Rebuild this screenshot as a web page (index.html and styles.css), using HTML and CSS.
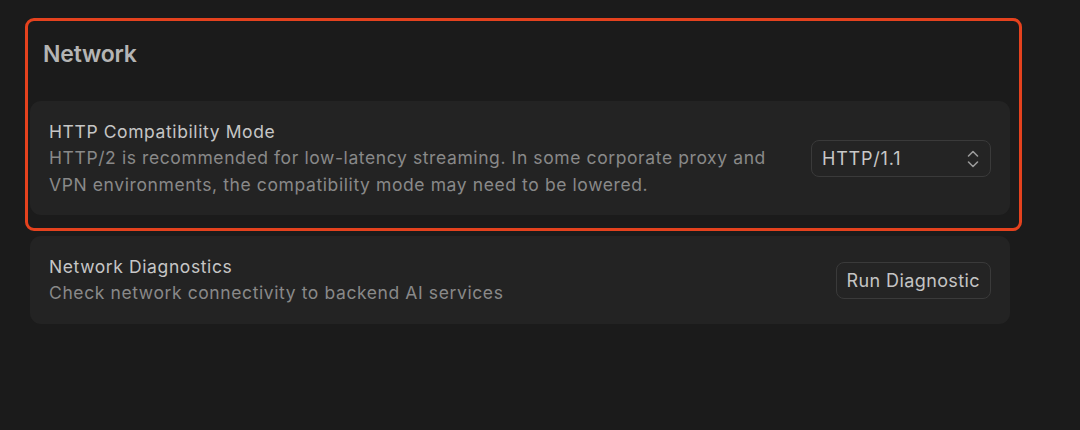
FILE: index.html
```html
<!DOCTYPE html>
<html lang="en">
<head>
<meta charset="utf-8">
<title>Network Settings</title>
<link rel="stylesheet" href="styles.css">
</head>
<body>
<main class="page">
  <section class="section">
    <h2 class="section-title">Network</h2>
    <div class="card">
      <div class="card-text">
        <div class="card-title">HTTP Compatibility Mode</div>
        <div class="card-desc">HTTP/2 is recommended for low-latency streaming. In some corporate proxy and<br>VPN environments, the compatibility mode may need to be lowered.</div>
      </div>
      <div class="select">
        <span class="select-value">HTTP/1.1</span>
        <svg class="select-icon" width="12" height="20" viewBox="0 0 12 20" fill="none" stroke="currentColor" stroke-width="1.6" stroke-linecap="round" stroke-linejoin="round">
          <path d="M1.5 7 L6 2.5 L10.5 7"/>
          <path d="M1.5 13 L6 17.5 L10.5 13"/>
        </svg>
      </div>
    </div>
    <div class="highlight"></div>
  </section>
  <div class="card card-single">
    <div class="card-text">
      <div class="card-title">Network Diagnostics</div>
      <div class="card-desc">Check network connectivity to backend AI services</div>
    </div>
    <button class="btn" type="button">Run Diagnostic</button>
  </div>
</main>
</body>
</html>
```

FILE: styles.css
```css
* { box-sizing: border-box; }
html, body {
  margin: 0;
  background: #1b1b1b;
}
body {
  font-family: Inter, "Noto Sans", "Liberation Sans", sans-serif;
  color: #c6c6c6;
  -webkit-font-smoothing: antialiased;
}
.page {
  padding: 21px 0 0 30px;
  width: 1010px;
  display: flex;
  flex-direction: column;
  gap: 21px;
}
.section {
  position: relative;
  display: flex;
  flex-direction: column;
}
.section-title {
  margin: 0 0 0 13px;
  font-size: 23px;
  line-height: 28px;
  font-weight: 600;
  color: #b4b4b4;
  height: 80px;
  padding-top: 19px;
  letter-spacing: -0.2px;
}
.card {
  background: #232323;
  border-radius: 11px;
  padding: 18px 19px 17px 19px;
  display: flex;
  align-items: center;
  justify-content: space-between;
  gap: 20px;
}
.card-text {
  display: flex;
  flex-direction: column;
}
.card-title {
  font-size: 17.5px;
  line-height: 26px;
  letter-spacing: 0.6px;
  color: #c6c6c6;
}
.card-desc {
  font-size: 17.5px;
  line-height: 26.5px;
  letter-spacing: 0.6px;
  color: #898989;
}
.select {
  width: 180px;
  height: 37px;
  border: 1px solid #3a3a3a;
  border-radius: 8px;
  background: #242424;
  display: flex;
  align-items: center;
  justify-content: space-between;
  padding: 0 11px 0 10px;
  color: #c8c8c8;
  font-size: 18px;
  letter-spacing: 0.8px;
}
.select-icon {
  color: #9a9a9a;
}
.btn {
  height: 37px;
  padding: 0 10px;
  border: 1px solid #3a3a3a;
  border-radius: 8px;
  background: #242424;
  color: #c4c4c4;
  font-family: inherit;
  font-size: 18px;
  letter-spacing: 0.4px;
}
.highlight {
  position: absolute;
  left: -5px;
  top: -3px;
  width: 997px;
  height: 213px;
  border: 3px solid #e5421e;
  border-radius: 9px;
  pointer-events: none;
}
```
